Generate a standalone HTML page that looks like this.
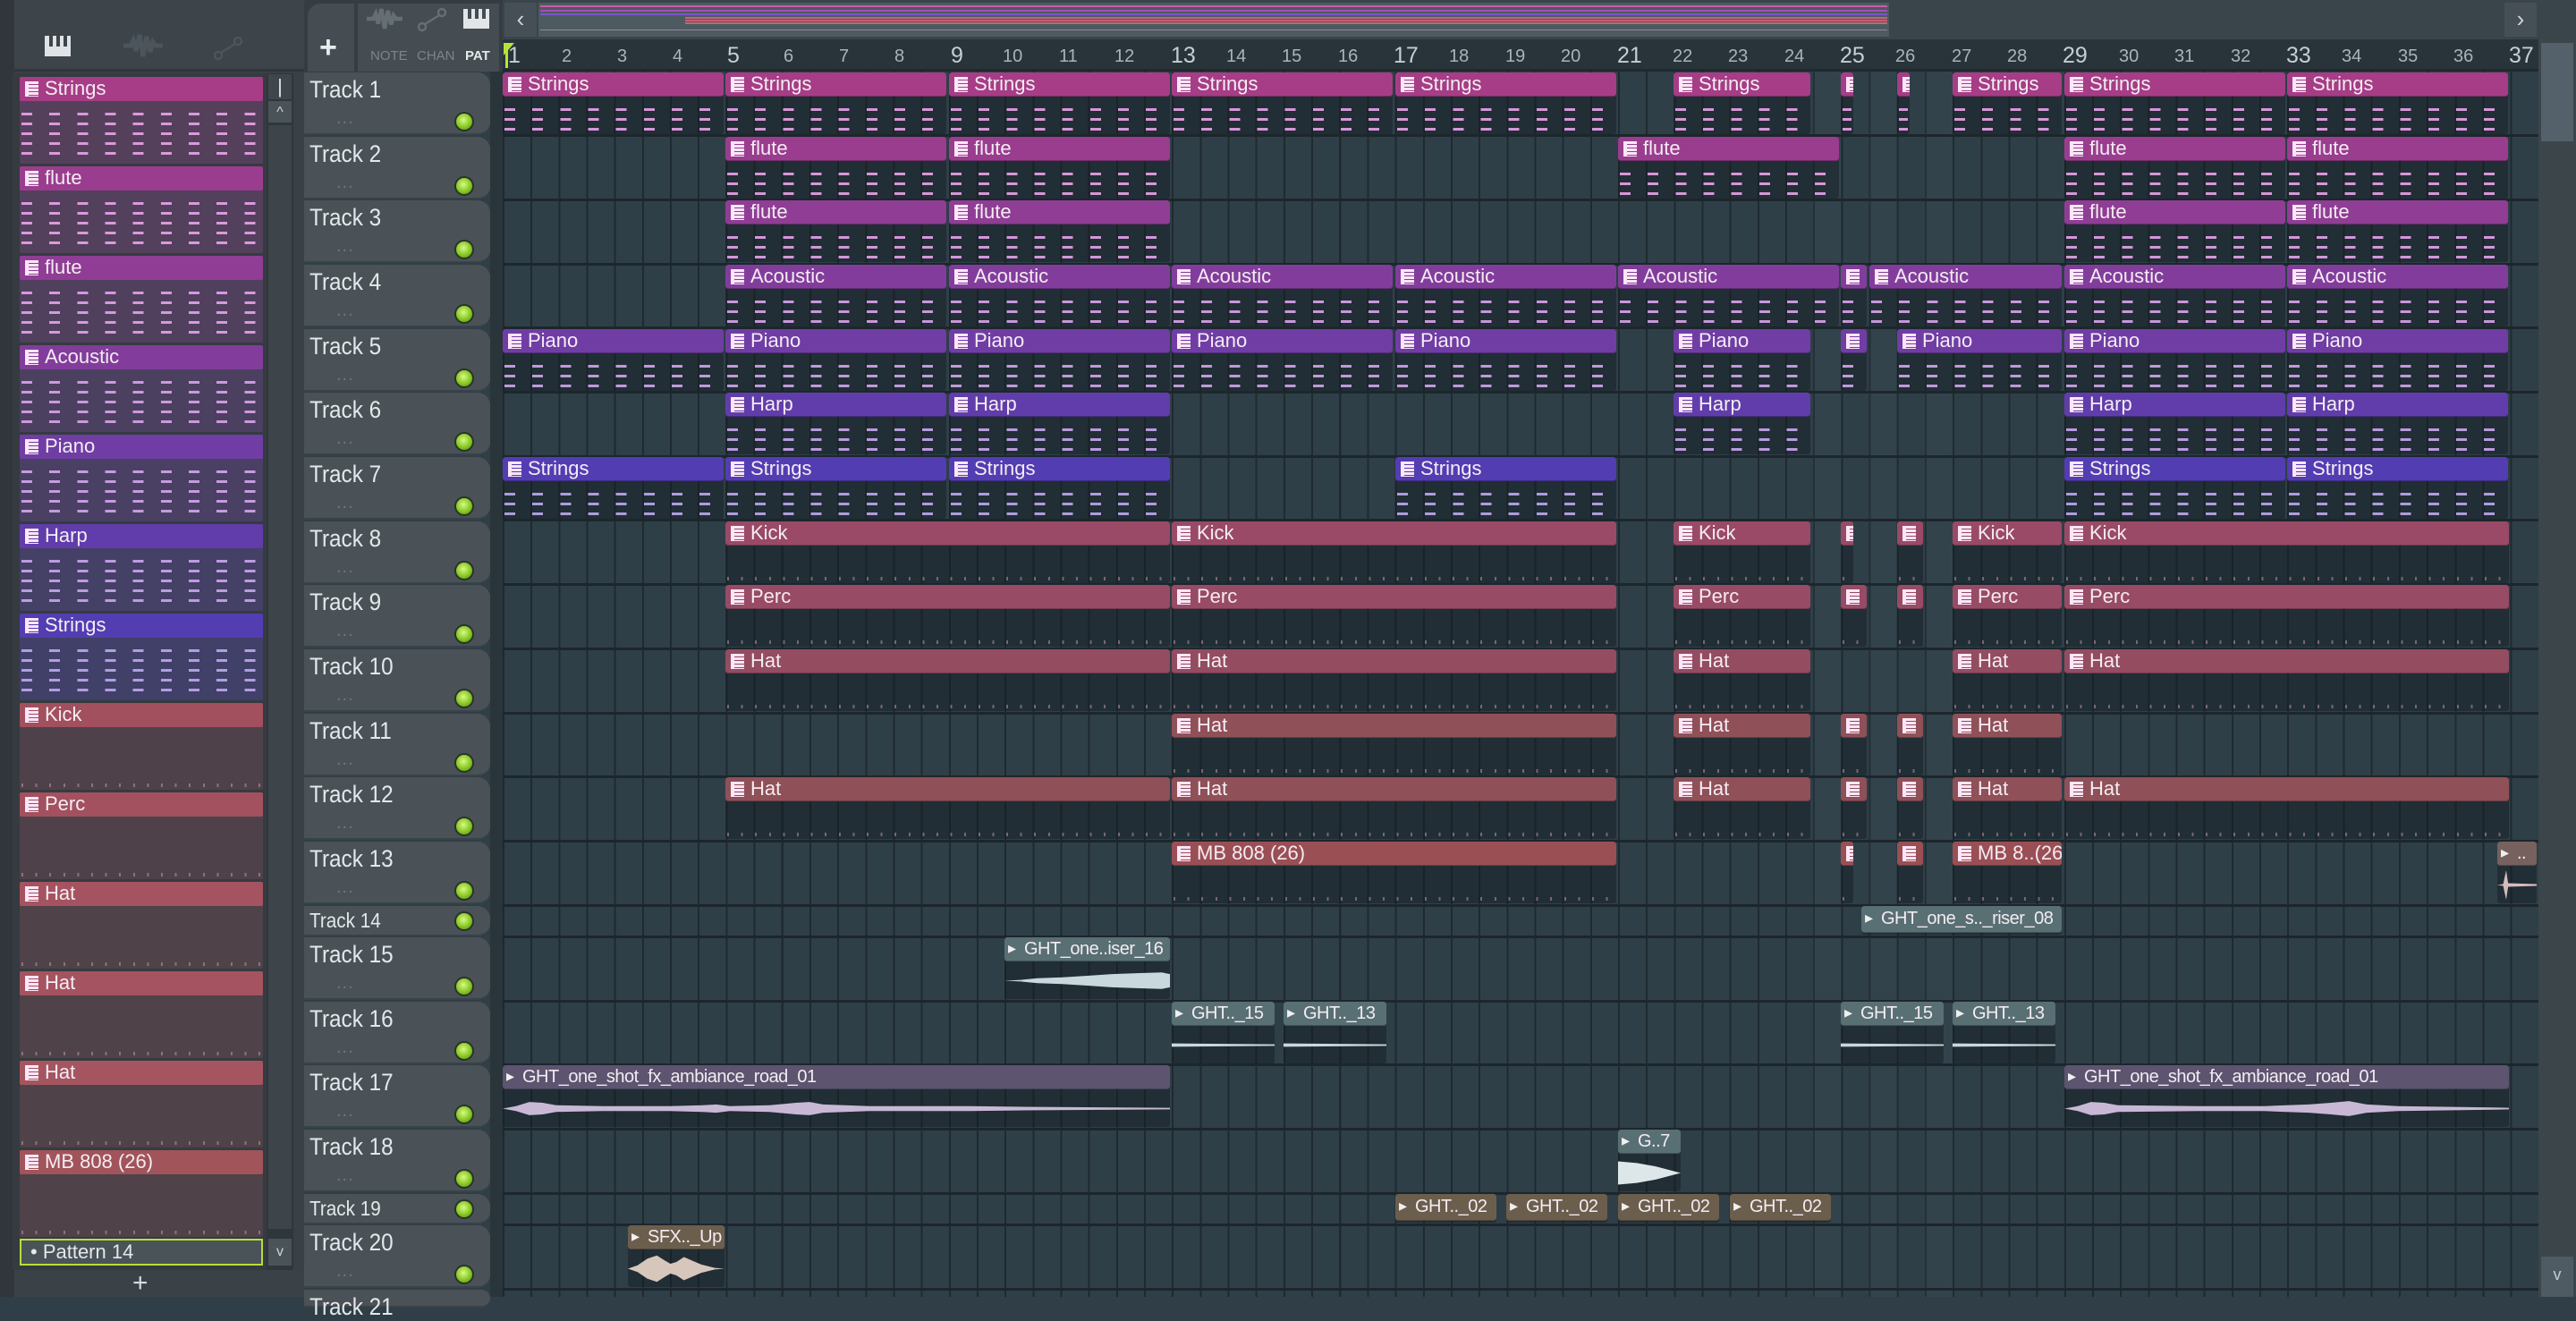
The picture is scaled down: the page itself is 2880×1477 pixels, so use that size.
<!DOCTYPE html>
<html><head><meta charset="utf-8">
<style>
*{box-sizing:border-box}
body{margin:0;width:2880px;height:1450px;overflow:hidden;background:#2f3e47;font-family:"Liberation Sans Narrow","Liberation Sans",sans-serif;position:relative}
div,span{position:absolute}
.lp{left:0;top:0;width:340px;height:1450px;background:#394046}
.g{left:562px;top:80px;width:2276px;height:1370px;background-color:#2f3f48;background-image:repeating-linear-gradient(to right,#1f2a30 0 2px,transparent 2px 31.175px)}
.hl{left:562px;width:2276px;height:3px;background:#1c262c}
.th{left:340px;width:208px;background:#4a5257;border-radius:0 14px 14px 0;border-bottom:2px solid #3a4247}
.th b{position:absolute;left:6px;top:4px;font-weight:normal;font-size:27px;color:#e4e8ea;transform:scaleX(.9);transform-origin:left}
.th i{position:absolute;left:36px;top:40px;font-style:normal;color:#6d767b;font-size:20px;letter-spacing:1px}
.led{left:168px;width:22px;height:22px;border-radius:50%;background:radial-gradient(circle at 45% 40%,#d9fa80,#7ec21e 60%,#4c7e10);border:2px solid #2a3328}
.c{height:69px;background:rgba(18,26,32,.45);border-radius:3px;overflow:hidden}
.c.s{height:32px}
.c>i{position:absolute;left:0;top:0;right:0;height:27px;background:var(--c);border-radius:3px;font-style:normal;color:#f4ecf2;font-size:22px;line-height:26px;padding-left:28px;white-space:nowrap;overflow:hidden;box-shadow:inset 0 -1px 0 rgba(0,0,0,.25)}
.c.a>i{font-size:20px;padding-left:22px;letter-spacing:-.5px}
.c.s>i{height:30px;line-height:29px}
.c>i:before{content:"";position:absolute;left:6px;top:5px;width:11px;height:17px;background:repeating-linear-gradient(to bottom,#fbe6f7 0 3px,var(--c) 3px 4px);border-left:4px solid #fbe6f7}
.c.a>i:before{content:"\25B8";background:none;border:none;color:#f0f0f0;font-size:18px;top:-1px;left:4px;width:auto;height:auto}
.p:after{content:"";position:absolute;left:2px;right:2px;top:32px;bottom:4px;background:repeating-linear-gradient(to bottom,transparent 0 8px,var(--n) 8px 11px);-webkit-mask-image:repeating-linear-gradient(to right,#000 0 12px,transparent 12px 31.175px);mask-image:repeating-linear-gradient(to right,#000 0 12px,transparent 12px 31.175px);opacity:.9}
.d:after{content:"";position:absolute;left:2px;right:2px;bottom:3px;height:4px;background:repeating-linear-gradient(to right,#c9a3b6 0 2px,transparent 2px 15.6px);opacity:.5}
.s1{--c:#a63d86;--n:#eaa3ea}.s2{--c:#9a3d8f;--n:#eaa3ea}.s3{--c:#8f3d95;--n:#e5a3ec}.s4{--c:#823d9c;--n:#dba3ec}
.s5{--c:#703da5;--n:#d4a5ee}.s6{--c:#613dab;--n:#caa6f0}.s7{--c:#533db2;--n:#bfa8f2}
.k{--c:#9a4a66}.pe{--c:#984b64}.h1{--c:#934c60}.h2{--c:#8f5058}.mb{--c:#9a4f55}
.tl{--c:#586f73}.pg{--c:#5d5470}.br{--c:#6c5e4d}
.wv{position:absolute;left:0;top:30px;width:100%;height:37px;display:block}
.pt{left:22px;width:272px;height:97px;background:var(--b);border-radius:2px}
.pt>i{position:absolute;left:0;top:0;right:0;height:27px;background:var(--c);font-style:normal;color:#f4ecf2;font-size:22px;line-height:26px;padding-left:28px;border-radius:2px}
.pt>i:before{content:"";position:absolute;left:6px;top:5px;width:11px;height:17px;background:repeating-linear-gradient(to bottom,#fbe6f7 0 3px,var(--c) 3px 4px);border-left:4px solid #fbe6f7}
.pt.p:after{top:32px}
.rn{top:52px;color:#a9b4ba;font-size:20px}
.rn.b{font-size:25px;top:48px;color:#c5ced3}
</style></head><body>

<div class="lp"></div>
<div style="left:0;top:0;width:16px;height:1450px;background:#30363b"></div>
<div style="left:16px;top:0;width:324px;height:80px;background:#3d444a;border-bottom:3px solid #30363b"></div>
<div style="left:50px;top:40px;width:29px;height:23px;background:#dfe3e6"></div>
<div style="left:55px;top:40px;width:4px;height:12px;background:#3d444a"></div>
<div style="left:63px;top:40px;width:4px;height:12px;background:#3d444a"></div>
<div style="left:71px;top:40px;width:4px;height:12px;background:#3d444a"></div>
<svg style="position:absolute;left:138px;top:36px" width="44" height="30" viewBox="0 0 44 30"><path d="M0 15 L8 15 L11 9 L14 21 L18 3 L22 27 L26 5 L30 22 L33 11 L36 15 L44 15" stroke="#4c555b" stroke-width="5" fill="none"/></svg>
<svg style="position:absolute;left:238px;top:40px" width="34" height="28" viewBox="0 0 34 28"><circle cx="6" cy="22" r="4" stroke="#4c555b" stroke-width="2.5" fill="none"/><circle cx="28" cy="6" r="4" stroke="#4c555b" stroke-width="2.5" fill="none"/><path d="M9 19 L25 9" stroke="#4c555b" stroke-width="2.5"/></svg>
<div style="left:14px;top:82px;width:284px;height:1338px;background:#353b40"></div>
<div style="left:298px;top:82px;width:30px;height:1338px;background:#30373c"></div>
<div style="left:300px;top:83px;width:26px;height:28px;background:#3f474c;color:#e2e6e8;font-size:22px;text-align:center;line-height:28px">|</div>
<div style="left:300px;top:113px;width:26px;height:24px;background:#4a5358;color:#d0d5d8;font-size:16px;text-align:center;line-height:26px">^</div>
<div style="left:300px;top:140px;width:26px;height:1234px;background:#3d454a"></div>

<div class="pt p s1" style="top:86px;--b:#55405b"><i>Strings</i></div>
<div class="pt p s2" style="top:186px;--b:#53405c"><i>flute</i></div>
<div class="pt p s3" style="top:286px;--b:#50405e"><i>flute</i></div>
<div class="pt p s4" style="top:386px;--b:#4c4060"><i>Acoustic</i></div>
<div class="pt p s5" style="top:486px;--b:#494063"><i>Piano</i></div>
<div class="pt p s6" style="top:586px;--b:#454066"><i>Harp</i></div>
<div class="pt p s7" style="top:686px;--b:#414068"><i>Strings</i></div>
<div class="pt d k" style="top:786px;--b:#4f4149;--c:#a24f5e"><i>Kick</i></div>
<div class="pt d pe" style="top:886px;--b:#4f4149;--c:#a3505f"><i>Perc</i></div>
<div class="pt d" style="top:986px;--b:#4f4249;--c:#a55360"><i>Hat</i></div>
<div class="pt d" style="top:1086px;--b:#4f4249;--c:#a55360"><i>Hat</i></div>
<div class="pt d" style="top:1186px;--b:#4f4249;--c:#a55560"><i>Hat</i></div>
<div class="pt d" style="top:1286px;--b:#4f4249;--c:#a1545a"><i>MB 808 (26)</i></div>
<div style="left:22px;top:1385px;width:272px;height:30px;background:#4a5358;border:2px solid #b8de3a;color:#e4e8ea;font-size:22px;line-height:26px;padding-left:10px">• Pattern 14</div>
<div style="left:300px;top:1385px;width:26px;height:30px;background:#4a5358;color:#cfd4d7;font-size:16px;text-align:center;line-height:30px">v</div>
<div style="left:16px;top:1420px;width:324px;height:30px;background:#3b4247"></div>
<div style="left:148px;top:1418px;color:#d6dadd;font-size:30px">+</div>

<div style="left:340px;top:0;width:222px;height:80px;background:#353d42"></div>
<div style="left:344px;top:4px;width:52px;height:76px;background:#454d52;border-radius:14px 0 0 0"></div>
<div style="left:357px;top:34px;color:#e8ecee;font-size:34px;font-weight:bold">+</div>
<div style="left:400px;top:4px;width:158px;height:76px;background:#454d52"></div>
<svg style="position:absolute;left:410px;top:6px" width="40" height="30" viewBox="0 0 44 30"><path d="M0 15 L8 15 L11 9 L14 21 L18 3 L22 27 L26 5 L30 22 L33 11 L36 15 L44 15" stroke="#656e73" stroke-width="5" fill="none"/></svg>
<svg style="position:absolute;left:466px;top:8px" width="34" height="28" viewBox="0 0 34 28"><circle cx="6" cy="22" r="4" stroke="#656e73" stroke-width="2.5" fill="none"/><circle cx="28" cy="6" r="4" stroke="#656e73" stroke-width="2.5" fill="none"/><path d="M9 19 L25 9" stroke="#656e73" stroke-width="2.5"/></svg>
<div style="left:518px;top:10px;width:29px;height:22px;background:#e2e6e8"></div>
<div style="left:523px;top:10px;width:4px;height:11px;background:#454d52"></div>
<div style="left:531px;top:10px;width:4px;height:11px;background:#454d52"></div>
<div style="left:539px;top:10px;width:4px;height:11px;background:#454d52"></div>
<div style="left:414px;top:54px;font-size:15px;color:#7b858a">NOTE</div>
<div style="left:466px;top:54px;font-size:15px;color:#7b858a">CHAN</div>
<div style="left:520px;top:54px;font-size:15px;color:#e4e8ea;font-weight:bold">PAT</div>

<div style="left:562px;top:0;width:2318px;height:48px;background:#3a454b"></div>
<div style="left:564px;top:3px;width:36px;height:38px;background:#454f55;color:#cfd5d8;font-size:26px;text-align:center;line-height:36px">‹</div>
<div style="left:602px;top:3px;width:1510px;height:38px;background:#4d5a60"></div>
<div style="left:604px;top:6px;width:1506px;height:2px;background:#d05aa8"></div>
<div style="left:604px;top:11px;width:1506px;height:2px;background:#a050b8"></div>
<div style="left:604px;top:15px;width:1506px;height:2px;background:#7a55c8"></div>
<div style="left:766px;top:19px;width:1344px;height:2px;background:#c86080"></div>
<div style="left:766px;top:22px;width:1344px;height:2px;background:#c86070"></div>
<div style="left:766px;top:25px;width:1344px;height:2px;background:#c06870"></div>
<div style="left:604px;top:33px;width:1506px;height:1px;background:#8a8a9a"></div>
<div style="left:2800px;top:3px;width:36px;height:38px;background:#454f55;color:#cfd5d8;font-size:26px;text-align:center;line-height:36px">›</div>
<div style="left:562px;top:44px;width:2276px;height:36px;background:#28343a;border-bottom:3px solid #1f292e"></div>
<div style="left:563px;top:48px;width:0;height:0;border-top:14px solid #b7e23c;border-right:12px solid transparent"></div>
<div style="left:565px;top:50px;width:3px;height:26px;background:#b7e23c"></div>

<div class="rn b" style="left:568px">1</div><div class="rn" style="left:628px">2</div><div class="rn" style="left:690px">3</div><div class="rn" style="left:752px">4</div>
<div class="rn b" style="left:813px">5</div><div class="rn" style="left:876px">6</div><div class="rn" style="left:938px">7</div><div class="rn" style="left:1000px">8</div>
<div class="rn b" style="left:1063px">9</div><div class="rn" style="left:1121px">10</div><div class="rn" style="left:1184px">11</div><div class="rn" style="left:1246px">12</div>
<div class="rn b" style="left:1309px">13</div><div class="rn" style="left:1371px">14</div><div class="rn" style="left:1433px">15</div><div class="rn" style="left:1496px">16</div>
<div class="rn b" style="left:1558px">17</div><div class="rn" style="left:1620px">18</div><div class="rn" style="left:1683px">19</div><div class="rn" style="left:1745px">20</div>
<div class="rn b" style="left:1808px">21</div><div class="rn" style="left:1870px">22</div><div class="rn" style="left:1932px">23</div><div class="rn" style="left:1995px">24</div>
<div class="rn b" style="left:2057px">25</div><div class="rn" style="left:2119px">26</div><div class="rn" style="left:2182px">27</div><div class="rn" style="left:2244px">28</div>
<div class="rn b" style="left:2306px">29</div><div class="rn" style="left:2369px">30</div><div class="rn" style="left:2431px">31</div><div class="rn" style="left:2494px">32</div>
<div class="rn b" style="left:2556px">33</div><div class="rn" style="left:2618px">34</div><div class="rn" style="left:2681px">35</div><div class="rn" style="left:2743px">36</div>
<div class="rn b" style="left:2805px">37</div>

<div class="g"></div>
<div style="left:548px;top:80px;width:14px;height:1370px;background:#2a353b"></div>
<div style="left:2027px;top:80px;width:31px;height:1370px;background:rgba(80,100,110,.12)"></div>
<div style="left:2090px;top:80px;width:31px;height:1370px;background:rgba(80,100,110,.12)"></div>
<div style="left:2152px;top:80px;width:31px;height:1370px;background:rgba(80,100,110,.12)"></div>
<div class="hl" style="top:150px"></div><div class="hl" style="top:222px"></div><div class="hl" style="top:294px"></div><div class="hl" style="top:365px"></div><div class="hl" style="top:437px"></div><div class="hl" style="top:509px"></div><div class="hl" style="top:580px"></div><div class="hl" style="top:652px"></div><div class="hl" style="top:724px"></div><div class="hl" style="top:796px"></div><div class="hl" style="top:867px"></div><div class="hl" style="top:939px"></div><div class="hl" style="top:1011px"></div><div class="hl" style="top:1046px"></div><div class="hl" style="top:1118px"></div><div class="hl" style="top:1189px"></div><div class="hl" style="top:1261px"></div><div class="hl" style="top:1333px"></div><div class="hl" style="top:1368px"></div><div class="hl" style="top:1440px"></div>

<div style="left:2838px;top:44px;width:42px;height:1406px;background:#3b454a"></div>
<div style="left:2841px;top:48px;width:36px;height:110px;background:#55616a"></div>
<div style="left:2841px;top:1405px;width:36px;height:45px;background:#4f5b62;color:#c6cdd1;font-size:18px;text-align:center;line-height:40px">v</div>

<div class="th" style="top:81px;height:70px"><b>Track 1</b><i>...</i><span class="led" style="top:44px"></span></div>
<div class="th" style="top:153px;height:70px"><b>Track 2</b><i>...</i><span class="led" style="top:44px"></span></div>
<div class="th" style="top:224px;height:70px"><b>Track 3</b><i>...</i><span class="led" style="top:44px"></span></div>
<div class="th" style="top:296px;height:70px"><b>Track 4</b><i>...</i><span class="led" style="top:44px"></span></div>
<div class="th" style="top:368px;height:70px"><b>Track 5</b><i>...</i><span class="led" style="top:44px"></span></div>
<div class="th" style="top:439px;height:70px"><b>Track 6</b><i>...</i><span class="led" style="top:44px"></span></div>
<div class="th" style="top:511px;height:70px"><b>Track 7</b><i>...</i><span class="led" style="top:44px"></span></div>
<div class="th" style="top:583px;height:70px"><b>Track 8</b><i>...</i><span class="led" style="top:44px"></span></div>
<div class="th" style="top:654px;height:70px"><b>Track 9</b><i>...</i><span class="led" style="top:44px"></span></div>
<div class="th" style="top:726px;height:70px"><b>Track 10</b><i>...</i><span class="led" style="top:44px"></span></div>
<div class="th" style="top:798px;height:70px"><b>Track 11</b><i>...</i><span class="led" style="top:44px"></span></div>
<div class="th" style="top:869px;height:70px"><b>Track 12</b><i>...</i><span class="led" style="top:44px"></span></div>
<div class="th" style="top:941px;height:70px"><b>Track 13</b><i>...</i><span class="led" style="top:44px"></span></div>
<div class="th" style="top:1013px;height:34px"><b style="font-size:23px;top:3px">Track 14</b><span class="led" style="top:6px"></span></div>
<div class="th" style="top:1048px;height:70px"><b>Track 15</b><i>...</i><span class="led" style="top:44px"></span></div>
<div class="th" style="top:1120px;height:70px"><b>Track 16</b><i>...</i><span class="led" style="top:44px"></span></div>
<div class="th" style="top:1191px;height:70px"><b>Track 17</b><i>...</i><span class="led" style="top:44px"></span></div>
<div class="th" style="top:1263px;height:70px"><b>Track 18</b><i>...</i><span class="led" style="top:44px"></span></div>
<div class="th" style="top:1335px;height:34px"><b style="font-size:23px;top:3px">Track 19</b><span class="led" style="top:6px"></span></div>
<div class="th" style="top:1370px;height:70px"><b>Track 20</b><i>...</i><span class="led" style="top:44px"></span></div>
<div class="th" style="top:1442px;height:20px"><b style="top:4px">Track 21</b></div>

<!-- Track 1 -->
<div class="c p s1" style="left:562px;top:81px;width:247px"><i>Strings</i></div>
<div class="c p s1" style="left:811px;top:81px;width:247px"><i>Strings</i></div>
<div class="c p s1" style="left:1061px;top:81px;width:247px"><i>Strings</i></div>
<div class="c p s1" style="left:1310px;top:81px;width:247px"><i>Strings</i></div>
<div class="c p s1" style="left:1560px;top:81px;width:247px"><i>Strings</i></div>
<div class="c p s1" style="left:1871px;top:81px;width:153px"><i>Strings</i></div>
<div class="c p s1" style="left:2058px;top:81px;width:14px"><i></i></div>
<div class="c p s1" style="left:2121px;top:81px;width:14px"><i></i></div>
<div class="c p s1" style="left:2183px;top:81px;width:122px"><i>Strings</i></div>
<div class="c p s1" style="left:2308px;top:81px;width:247px"><i>Strings</i></div>
<div class="c p s1" style="left:2557px;top:81px;width:247px"><i>Strings</i></div>
<!-- Track 2 -->
<div class="c p s2" style="left:811px;top:153px;width:247px"><i>flute</i></div>
<div class="c p s2" style="left:1061px;top:153px;width:247px"><i>flute</i></div>
<div class="c p s2" style="left:1809px;top:153px;width:247px"><i>flute</i></div>
<div class="c p s2" style="left:2308px;top:153px;width:247px"><i>flute</i></div>
<div class="c p s2" style="left:2557px;top:153px;width:247px"><i>flute</i></div>
<!-- Track 3 -->
<div class="c p s3" style="left:811px;top:224px;width:247px"><i>flute</i></div>
<div class="c p s3" style="left:1061px;top:224px;width:247px"><i>flute</i></div>
<div class="c p s3" style="left:2308px;top:224px;width:247px"><i>flute</i></div>
<div class="c p s3" style="left:2557px;top:224px;width:247px"><i>flute</i></div>
<!-- Track 4 -->
<div class="c p s4" style="left:811px;top:296px;width:247px"><i>Acoustic</i></div>
<div class="c p s4" style="left:1061px;top:296px;width:247px"><i>Acoustic</i></div>
<div class="c p s4" style="left:1310px;top:296px;width:247px"><i>Acoustic</i></div>
<div class="c p s4" style="left:1560px;top:296px;width:247px"><i>Acoustic</i></div>
<div class="c p s4" style="left:1809px;top:296px;width:247px"><i>Acoustic</i></div>
<div class="c p s4" style="left:2058px;top:296px;width:29px"><i></i></div>
<div class="c p s4" style="left:2090px;top:296px;width:215px"><i>Acoustic</i></div>
<div class="c p s4" style="left:2308px;top:296px;width:247px"><i>Acoustic</i></div>
<div class="c p s4" style="left:2557px;top:296px;width:247px"><i>Acoustic</i></div>
<!-- Track 5 -->
<div class="c p s5" style="left:562px;top:368px;width:247px"><i>Piano</i></div>
<div class="c p s5" style="left:811px;top:368px;width:247px"><i>Piano</i></div>
<div class="c p s5" style="left:1061px;top:368px;width:247px"><i>Piano</i></div>
<div class="c p s5" style="left:1310px;top:368px;width:247px"><i>Piano</i></div>
<div class="c p s5" style="left:1560px;top:368px;width:247px"><i>Piano</i></div>
<div class="c p s5" style="left:1871px;top:368px;width:153px"><i>Piano</i></div>
<div class="c p s5" style="left:2058px;top:368px;width:29px"><i></i></div>
<div class="c p s5" style="left:2121px;top:368px;width:184px"><i>Piano</i></div>
<div class="c p s5" style="left:2308px;top:368px;width:247px"><i>Piano</i></div>
<div class="c p s5" style="left:2557px;top:368px;width:247px"><i>Piano</i></div>
<!-- Track 6 -->
<div class="c p s6" style="left:811px;top:439px;width:247px"><i>Harp</i></div>
<div class="c p s6" style="left:1061px;top:439px;width:247px"><i>Harp</i></div>
<div class="c p s6" style="left:1871px;top:439px;width:153px"><i>Harp</i></div>
<div class="c p s6" style="left:2308px;top:439px;width:247px"><i>Harp</i></div>
<div class="c p s6" style="left:2557px;top:439px;width:247px"><i>Harp</i></div>
<!-- Track 7 -->
<div class="c p s7" style="left:562px;top:511px;width:247px"><i>Strings</i></div>
<div class="c p s7" style="left:811px;top:511px;width:247px"><i>Strings</i></div>
<div class="c p s7" style="left:1061px;top:511px;width:247px"><i>Strings</i></div>
<div class="c p s7" style="left:1560px;top:511px;width:247px"><i>Strings</i></div>
<div class="c p s7" style="left:2308px;top:511px;width:247px"><i>Strings</i></div>
<div class="c p s7" style="left:2557px;top:511px;width:247px"><i>Strings</i></div>
<!-- Track 8 -->
<div class="c d k" style="left:811px;top:583px;width:497px"><i>Kick</i></div>
<div class="c d k" style="left:1310px;top:583px;width:497px"><i>Kick</i></div>
<div class="c d k" style="left:1871px;top:583px;width:153px"><i>Kick</i></div>
<div class="c d k" style="left:2058px;top:583px;width:14px"><i></i></div>
<div class="c d k" style="left:2121px;top:583px;width:29px"><i></i></div>
<div class="c d k" style="left:2183px;top:583px;width:122px"><i>Kick</i></div>
<div class="c d k" style="left:2308px;top:583px;width:497px"><i>Kick</i></div>
<!-- Track 9 -->
<div class="c d pe" style="left:811px;top:654px;width:497px"><i>Perc</i></div>
<div class="c d pe" style="left:1310px;top:654px;width:497px"><i>Perc</i></div>
<div class="c d pe" style="left:1871px;top:654px;width:153px"><i>Perc</i></div>
<div class="c d pe" style="left:2058px;top:654px;width:29px"><i></i></div>
<div class="c d pe" style="left:2121px;top:654px;width:29px"><i></i></div>
<div class="c d pe" style="left:2183px;top:654px;width:122px"><i>Perc</i></div>
<div class="c d pe" style="left:2308px;top:654px;width:497px"><i>Perc</i></div>
<!-- Track 10 -->
<div class="c d h1" style="left:811px;top:726px;width:497px"><i>Hat</i></div>
<div class="c d h1" style="left:1310px;top:726px;width:497px"><i>Hat</i></div>
<div class="c d h1" style="left:1871px;top:726px;width:153px"><i>Hat</i></div>
<div class="c d h1" style="left:2183px;top:726px;width:122px"><i>Hat</i></div>
<div class="c d h1" style="left:2308px;top:726px;width:497px"><i>Hat</i></div>
<!-- Track 11 -->
<div class="c d h2" style="left:1310px;top:798px;width:497px"><i>Hat</i></div>
<div class="c d h2" style="left:1871px;top:798px;width:153px"><i>Hat</i></div>
<div class="c d h2" style="left:2058px;top:798px;width:29px"><i></i></div>
<div class="c d h2" style="left:2121px;top:798px;width:29px"><i></i></div>
<div class="c d h2" style="left:2183px;top:798px;width:122px"><i>Hat</i></div>
<!-- Track 12 -->
<div class="c d h2" style="left:811px;top:869px;width:497px"><i>Hat</i></div>
<div class="c d h2" style="left:1310px;top:869px;width:497px"><i>Hat</i></div>
<div class="c d h2" style="left:1871px;top:869px;width:153px"><i>Hat</i></div>
<div class="c d h2" style="left:2058px;top:869px;width:29px"><i></i></div>
<div class="c d h2" style="left:2121px;top:869px;width:29px"><i></i></div>
<div class="c d h2" style="left:2183px;top:869px;width:122px"><i>Hat</i></div>
<div class="c d h2" style="left:2308px;top:869px;width:497px"><i>Hat</i></div>
<!-- Track 13 -->
<div class="c d mb" style="left:1310px;top:941px;width:497px"><i>MB 808 (26)</i></div>
<div class="c d mb" style="left:2058px;top:941px;width:14px"><i></i></div>
<div class="c d mb" style="left:2121px;top:941px;width:29px"><i></i></div>
<div class="c d mb" style="left:2183px;top:941px;width:122px"><i>MB 8..(26)</i></div>
<div class="c a" style="left:2792px;top:941px;width:44px;--c:#76615e"><i>..</i><svg class="wv" viewBox="0 0 40 36" preserveAspectRatio="none"><path d="M0 18 L6 17 L9 2 L11 16 L40 17 L40 19 L11 20 L9 34 L6 19 Z" fill="#d8bcbc"/></svg></div>
<!-- Track 14 -->
<div class="c s a tl" style="left:2081px;top:1013px;width:224px"><i>GHT_one_s.._riser_08</i></div>
<!-- Track 15 -->
<div class="c a tl" style="left:1123px;top:1048px;width:185px"><i>GHT_one..iser_16</i><svg class="wv" viewBox="0 0 100 40" preserveAspectRatio="none"><path d="M0 20 L10 19 L20 17 L35 16 L50 14 L65 12 L80 11 L95 10 L100 12 L100 28 L95 30 L80 29 L65 28 L50 26 L35 24 L20 23 L10 21 Z" fill="#c9d8dc"/></svg></div>
<!-- Track 16 -->
<div class="c a tl" style="left:1310px;top:1120px;width:115px"><i>GHT.._15</i><svg class="wv" viewBox="0 0 100 40" preserveAspectRatio="none"><path d="M0 18 L100 19 L100 21 L0 22 Z" fill="#c9d8dc"/></svg></div>
<div class="c a tl" style="left:1435px;top:1120px;width:115px"><i>GHT.._13</i><svg class="wv" viewBox="0 0 100 40" preserveAspectRatio="none"><path d="M0 18 L100 19 L100 21 L0 22 Z" fill="#c9d8dc"/></svg></div>
<div class="c a tl" style="left:2058px;top:1120px;width:115px"><i>GHT.._15</i><svg class="wv" viewBox="0 0 100 40" preserveAspectRatio="none"><path d="M0 18 L100 19 L100 21 L0 22 Z" fill="#c9d8dc"/></svg></div>
<div class="c a tl" style="left:2183px;top:1120px;width:115px"><i>GHT.._13</i><svg class="wv" viewBox="0 0 100 40" preserveAspectRatio="none"><path d="M0 18 L100 19 L100 21 L0 22 Z" fill="#c9d8dc"/></svg></div>
<!-- Track 17 -->
<div class="c a pg" style="left:562px;top:1191px;width:746px"><i>GHT_one_shot_fx_ambiance_road_01</i><svg class="wv" viewBox="0 0 200 40" preserveAspectRatio="none"><path d="M0 20 L4 17 L8 12 L12 13 L16 16 L30 17 L50 17 L60 16 L64 15 L68 17 L80 16 L88 13 L92 12 L96 15 L110 17 L140 17 L160 18 L200 19 L200 21 L160 22 L140 23 L110 23 L96 25 L92 28 L88 27 L80 24 L68 23 L64 25 L60 24 L50 23 L30 23 L16 24 L12 27 L8 28 L4 23 Z" fill="#c8b8d6"/></svg></div>
<div class="c a pg" style="left:2308px;top:1191px;width:497px"><i>GHT_one_shot_fx_ambiance_road_01</i><svg class="wv" viewBox="0 0 200 40" preserveAspectRatio="none"><path d="M0 20 L6 17 L12 12 L18 13 L24 16 L60 17 L90 17 L100 16 L110 15 L120 13 L128 11 L136 15 L150 17 L200 19 L200 21 L150 23 L136 25 L128 29 L120 27 L110 25 L100 24 L90 23 L60 23 L24 24 L18 27 L12 28 L6 23 Z" fill="#c8b8d6"/></svg></div>
<!-- Track 18 -->
<div class="c a tl" style="left:1809px;top:1263px;width:70px"><i>G..7</i><svg class="wv" viewBox="0 0 100 40" preserveAspectRatio="none"><path d="M0 6 L30 8 L60 12 L85 17 L100 20 L85 23 L60 28 L30 32 L0 34 Z" fill="#dde6e8"/></svg></div>
<!-- Track 19 -->
<div class="c s a br" style="left:1560px;top:1335px;width:113px"><i>GHT.._02</i></div>
<div class="c s a br" style="left:1684px;top:1335px;width:113px"><i>GHT.._02</i></div>
<div class="c s a br" style="left:1809px;top:1335px;width:113px"><i>GHT.._02</i></div>
<div class="c s a br" style="left:1934px;top:1335px;width:113px"><i>GHT.._02</i></div>
<!-- Track 20 -->
<div class="c a br" style="left:702px;top:1370px;width:108px"><i>SFX.._Up</i><svg class="wv" viewBox="0 0 100 40" preserveAspectRatio="none"><path d="M0 20 L10 16 L20 8 L30 4 L38 10 L44 14 L50 12 L58 6 L66 10 L76 15 L90 19 L100 20 L90 21 L76 25 L66 30 L58 34 L50 28 L44 26 L38 30 L30 36 L20 32 L10 24 Z" fill="#d6c6bc"/></svg></div>

</body></html>
